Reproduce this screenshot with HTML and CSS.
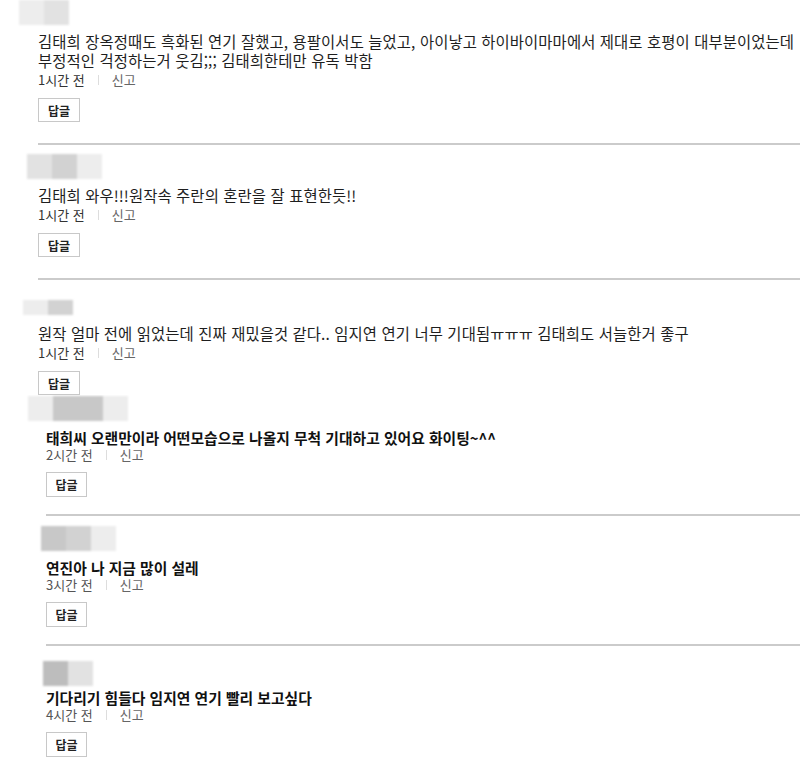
FILE: index.html
```html
<!DOCTYPE html>
<html lang="ko">
<head>
  <meta charset="UTF-8" />
  <meta name="viewport" content="width=device-width, initial-scale=1.0" />
  <title>댓글</title>
  <link rel="stylesheet" href="styles.css">
</head>
<body>
  <div class="thread thread-top">
    <div class="comment">
      <div class="avatar av-1"><span class="tone-1"></span><span class="tone-2"></span></div>
      <p class="body">김태희 장옥정때도 흑화된 연기 잘했고, 용팔이서도 늘었고, 아이낳고 하이바이마마에서 제대로 호평이 대부분이었는데 부정적인 걱정하는거 웃김;;; 김태희한테만 유독 박함</p>
      <div class="meta"><span class="time">1시간 전</span><span class="sep"></span><span class="report">신고</span></div>
      <button class="reply">답글</button>
    </div>
    <div class="comment">
      <div class="avatar av-2"><span class="tone-2"></span><span class="tone-3"></span><span class="tone-1"></span></div>
      <p class="body">김태희 와우!!!원작속 주란의 혼란을 잘 표현한듯!!</p>
      <div class="meta"><span class="time">1시간 전</span><span class="sep"></span><span class="report">신고</span></div>
      <button class="reply">답글</button>
    </div>
    <div class="comment">
      <div class="avatar av-3"><span class="tone-1"></span><span class="tone-3"></span></div>
      <p class="body">원작 얼마 전에 읽었는데 진짜 재밌을것 같다.. 임지연 연기 너무 기대됨ㅠㅠㅠ 김태희도 서늘한거 좋구</p>
      <div class="meta"><span class="time">1시간 전</span><span class="sep"></span><span class="report">신고</span></div>
      <button class="reply">답글</button>
    </div>
  </div>

  <div class="thread thread-bottom">
    <div class="comment">
      <div class="avatar av-4"><span class="tone-1"></span><span class="tone-4"></span><span class="tone-4"></span><span class="tone-1"></span></div>
      <p class="body">태희씨 오랜만이라 어떤모습으로 나올지 무척 기대하고 있어요 화이팅~^^</p>
      <div class="meta"><span class="time">2시간 전</span><span class="sep"></span><span class="report">신고</span></div>
      <button class="reply">답글</button>
    </div>
    <div class="comment">
      <div class="avatar av-5"><span class="tone-4"></span><span class="tone-3"></span><span class="tone-1"></span></div>
      <p class="body">연진아 나 지금 많이 설레</p>
      <div class="meta"><span class="time">3시간 전</span><span class="sep"></span><span class="report">신고</span></div>
      <button class="reply">답글</button>
    </div>
    <div class="comment">
      <div class="avatar av-6"><span class="tone-5"></span><span class="tone-2"></span></div>
      <p class="body">기다리기 힘들다 임지연 연기 빨리 보고싶다</p>
      <div class="meta"><span class="time">4시간 전</span><span class="sep"></span><span class="report">신고</span></div>
      <button class="reply">답글</button>
    </div>
  </div>
</body>
</html>
```

FILE: styles.css
```css
* {
  box-sizing: border-box;
}
body {
  margin: 0;
  background: #fff;
  color: #222;
  font-family: "Noto Sans CJK KR", "Noto Sans", sans-serif;
}
.thread {
  overflow: hidden;
}
.thread-top {
  height: 395px;
  padding-left: 38px;
}
.thread-bottom {
  padding-left: 46px;
}
.comment {
  padding: 9px 0 21px;
  border-bottom: 2px solid #cbcbcb;
}
.comment:first-child {
  padding-top: 0;
}
.comment:last-child {
  border-bottom: none;
}
.thread-bottom .comment {
  padding: 10px 0 17px;
}
.thread-bottom .comment:first-child {
  padding-top: 1px;
}

/* blurred profile thumbnails */
.avatar {
  display: flex;
  height: 25px;
  filter: blur(1.2px);
}
.avatar span {
  width: 25px;
}
.av-1 { margin-left: -19px; }
.av-2 { margin-left: -11px; }
.av-3 {
  margin-left: -15px;
  height: 28px;
  align-items: flex-end;
  padding-bottom: 2px;
}
.av-3 span { height: 15px; }
.av-4 { margin-left: -18px; }
.av-5 { margin-left: -5px; }
.av-6 {
  margin-left: -3px;
  margin-top: 5px;
}
.tone-1 { background: #ededed; }
.tone-2 { background: #e2e2e2; }
.tone-3 { background: #d2d2d2; }
.tone-4 { background: #c8c8c8; }
.tone-5 { background: #bdbdbd; }

.body {
  margin: 7px 0 0;
  font-size: 15.4px;
  letter-spacing: 0.1px;
  line-height: 19px;
  word-break: keep-all;
  color: #1e1e1e;
}
.thread-bottom .body {
  font-size: 14.8px;
  letter-spacing: 0;
  font-weight: 700;
  color: #111;
}
.av-6 + .body {
  margin-top: 2px;
}

.meta {
  display: flex;
  align-items: center;
  margin-top: 2px;
  font-size: 13px;
  line-height: 16px;
}
.thread-bottom .meta {
  margin-top: 0;
}
.time {
  color: #333;
}
.thread-bottom .time {
  color: #555;
}
.sep {
  width: 1px;
  height: 10px;
  margin: 0 13px;
  background: #ddd;
}
.report {
  color: #666;
}

.reply {
  display: block;
  width: 42px;
  height: 24px;
  margin-top: 10px;
  padding: 0;
  border: 1px solid #c8c8c8;
  border-radius: 0;
  background: #fff;
  color: #222;
  font: 700 12px "Noto Sans CJK KR", sans-serif;
}
.thread-bottom .reply {
  width: 41px;
  height: 25px;
  margin-top: 9px;
}
```
